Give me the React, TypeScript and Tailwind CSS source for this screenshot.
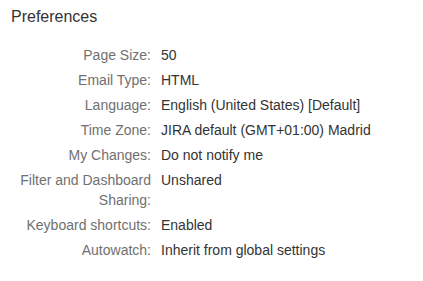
const rows: [string, string][] = [
  ['Page Size:', '50'],
  ['Email Type:', 'HTML'],
  ['Language:', 'English (United States) [Default]'],
  ['Time Zone:', 'JIRA default (GMT+01:00) Madrid'],
  ['My Changes:', 'Do not notify me'],
  ['Filter and Dashboard Sharing:', 'Unshared'],
  ['Keyboard shortcuts:', 'Enabled'],
  ['Autowatch:', 'Inherit from global settings'],
];

export default function App() {
  return (
    <div className="w-[423px] h-[281px] bg-white font-['Liberation_Sans',Arial,sans-serif] text-[#333]">
      <h2 className="pt-[5px] pl-[11px] text-[16px] leading-[24px] font-normal">Preferences</h2>
      <div className="mt-[16px] flex flex-col gap-[5px] pl-[10px]">
        {rows.map(([label, value]) => (
          <div key={label} className="flex gap-[10px] text-[14px] leading-[20px]">
            <div className="w-[141px] shrink-0 text-right text-[#707070]">{label}</div>
            <div className="text-[#333]">{value}</div>
          </div>
        ))}
      </div>
    </div>
  );
}
